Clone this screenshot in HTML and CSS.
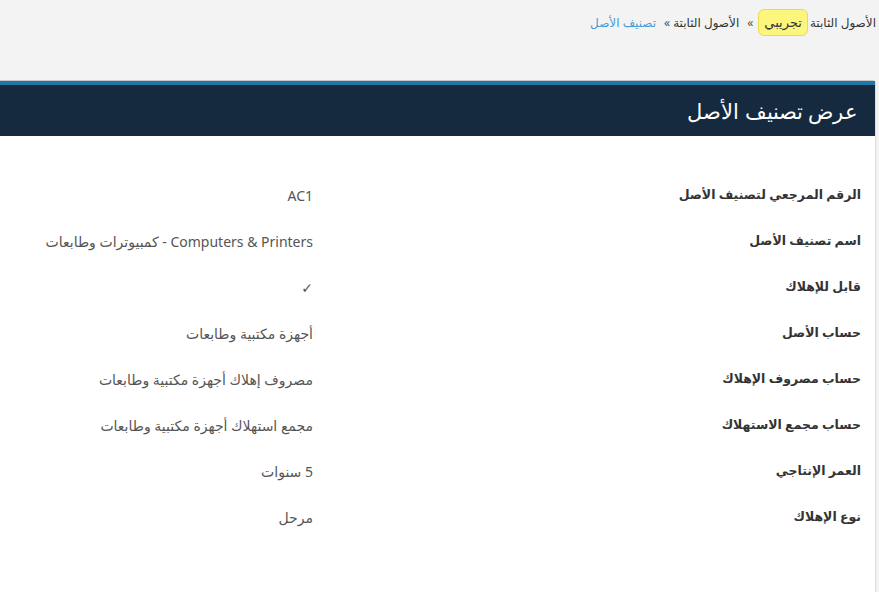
FILE: index.html
```html
<!DOCTYPE html>
<html lang="ar" dir="rtl">
<head>
    <meta charset="UTF-8">
    <meta name="viewport" content="width=device-width, initial-scale=1.0">
    <title>عرض تصنيف الأصل</title>
    <link rel="stylesheet" href="styles.css">
</head>
<body>

    <div class="breadcrumb">
        <span class="crumb">الأصول الثابتة</span>
        <span class="badge">تجريبي</span>
        <span class="sep">»</span>
        <span class="crumb">الأصول الثابتة</span>
        <span class="sep">»</span>
        <span class="crumb active">تصنيف الأصل</span>
    </div>

    <div class="card">
        <div class="card-header">
            <h1>عرض تصنيف الأصل</h1>
        </div>

        <div class="card-body">
            <div class="row">
                <div class="label">الرقم المرجعي لتصنيف الأصل</div>
                <div class="value">AC1</div>
            </div>
            <div class="row">
                <div class="label">اسم تصنيف الأصل</div>
                <div class="value">Computers &amp; Printers - كمبيوترات وطابعات</div>
            </div>
            <div class="row">
                <div class="label">قابل للإهلاك</div>
                <div class="value">✓</div>
            </div>
            <div class="row">
                <div class="label">حساب الأصل</div>
                <div class="value">أجهزة مكتبية وطابعات</div>
            </div>
            <div class="row">
                <div class="label">حساب مصروف الإهلاك</div>
                <div class="value">مصروف إهلاك أجهزة مكتبية وطابعات</div>
            </div>
            <div class="row">
                <div class="label">حساب مجمع الاستهلاك</div>
                <div class="value">مجمع استهلاك أجهزة مكتبية وطابعات</div>
            </div>
            <div class="row">
                <div class="label">العمر الإنتاجي</div>
                <div class="value">5 سنوات</div>
            </div>
            <div class="row">
                <div class="label">نوع الإهلاك</div>
                <div class="value">مرحل</div>
            </div>
        </div>
    </div>

</body>
</html>
```

FILE: styles.css
```css
body, html {
    margin: 0;
    padding: 0;
    height: 100%;
    font-family: "Noto Sans", "DejaVu Sans", sans-serif;
    background-color: #f3f3f3;
    color: #333;
    overflow: hidden;
}

body {
    display: flex;
    flex-direction: column;
}

/* top breadcrumb */
.breadcrumb {
    display: flex;
    align-items: center;
    gap: 3px;
    height: 44px;
    padding: 0 3px 0 0;
    font-size: 12px;
}

.crumb {
    color: #333;
}

.crumb.active {
    color: #4a9ad8;
}

.sep {
    color: #555;
    margin-left: 5px;
}

.badge {
    background-color: #fdf67c;
    border: 1px solid #e8db5a;
    border-radius: 6px;
    padding: 3px 5px 4px;
    margin: 0 -1px 0 2px;
    font-size: 13px;
}

/* main card */
.card {
    flex: 1;
    margin: 36px 3px 0 -4px;
    background-color: #fff;
    border-top: 1px solid #c8c8c8;
    border-right: 1px solid #ddd;
    border-top-right-radius: 4px;
}

.card-header {
    background-color: #152a3f;
    border-top: 4px solid #1f77a6;
    height: 51px;
    display: flex;
    align-items: center;
    padding: 0 17px 0 0;
}

.card-header h1 {
    margin: 0;
    color: #fff;
    font-size: 21px;
    font-weight: 300;
}

.card-body {
    padding-top: 50px;
}

.row {
    display: flex;
    height: 46px;
}

.label {
    width: 532px;
    padding-right: 14px;
    font-size: 12.5px;
    font-weight: bold;
    color: #333;
}

.value {
    padding-right: 16px;
    font-size: 14px;
    color: #555;
}
```
